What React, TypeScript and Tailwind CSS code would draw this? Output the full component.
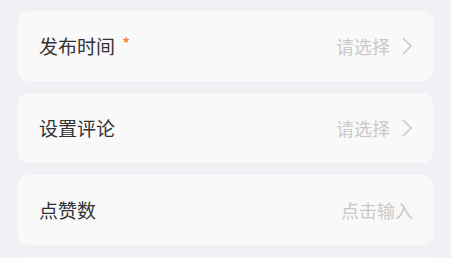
type RowProps = {
  label: string;
  required?: boolean;
  placeholder: string;
  arrow?: boolean;
};

function Chevron() {
  return (
    <svg width="11" height="18" viewBox="0 0 11 18" fill="none" className="ml-[12px] shrink-0">
      <path d="M1.5 1.5 L9 9 L1.5 16.5" stroke="#c9c9c9" strokeWidth="1.5" strokeLinecap="round" strokeLinejoin="round" />
    </svg>
  );
}

function Row({ label, required, placeholder, arrow }: RowProps) {
  return (
    <div className="flex h-[70px] shrink-0 items-center justify-between rounded-[10px] bg-[#f9f9f9] pl-[21px] pr-[20px]">
      <div className="flex items-center text-[19px] text-[#333333]">
        {label}
        {required && <span className="ml-[7px] -translate-y-[3px] text-[18px] leading-none text-[#f5782a]">*</span>}
      </div>
      <div className="flex items-center text-[18px] text-[#c9c9c9]">
        {placeholder}
        {arrow && <Chevron />}
      </div>
    </div>
  );
}

export default function App() {
  const rows: RowProps[] = [
    { label: "发布时间", required: true, placeholder: "请选择", arrow: true },
    { label: "设置评论", placeholder: "请选择", arrow: true },
    { label: "点赞数", placeholder: "点击输入" },
  ];

  return (
    <div
      className="flex h-[258px] flex-col gap-[12px] overflow-hidden bg-[#f0f1f5] px-[18px] pt-[11px]"
      style={{ fontFamily: '"Noto Sans CJK SC", "Noto Sans", sans-serif' }}
    >
      {rows.map((r) => (
        <Row key={r.label} {...r} />
      ))}
      {/* next card peeking in at the bottom edge */}
      <div className="h-[70px] shrink-0 rounded-[10px] bg-[#f9f9f9]" />
    </div>
  );
}
